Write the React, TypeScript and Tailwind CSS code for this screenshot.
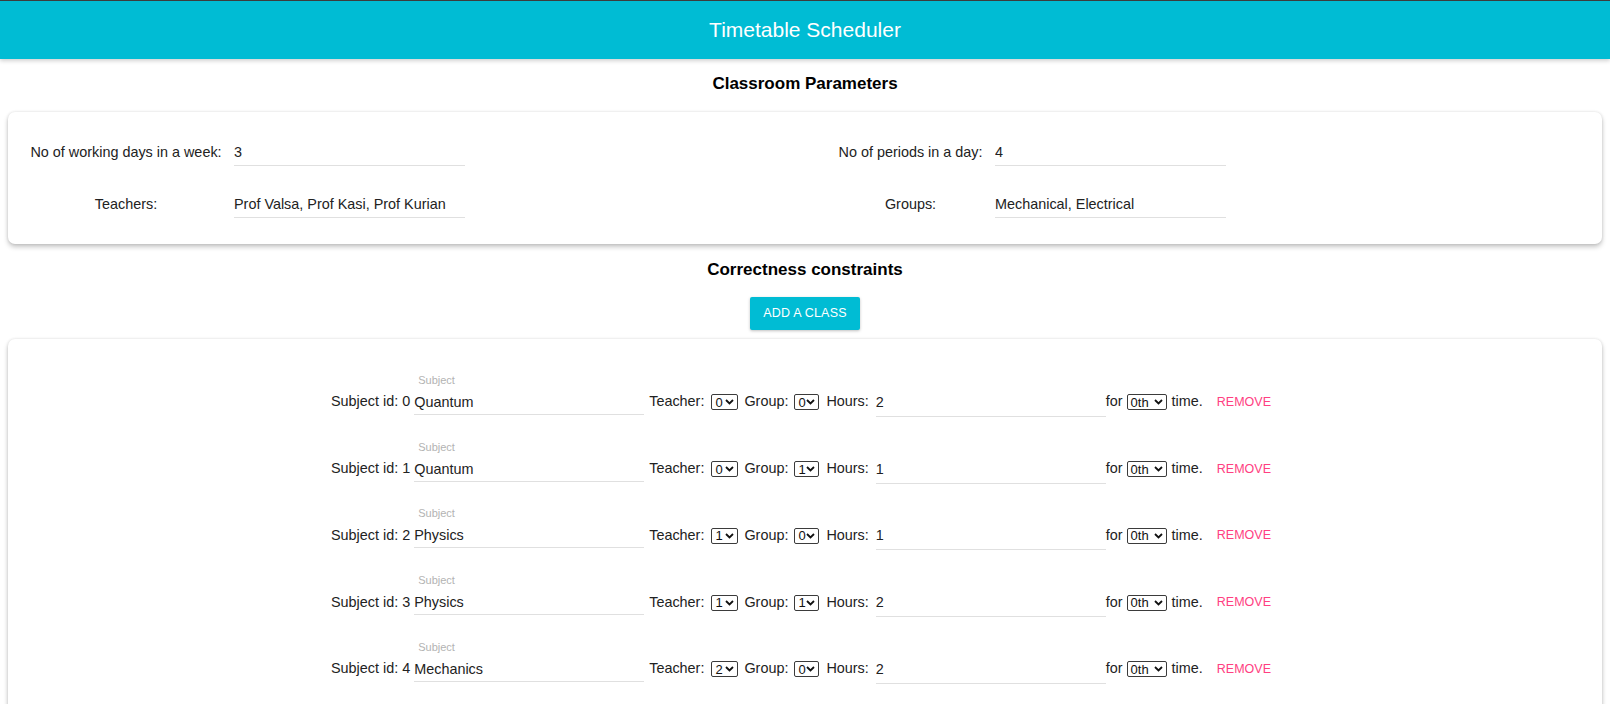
import React from "react";

const rows = [
  { name: "Quantum", teacher: "0", group: "0", hours: "2" },
  { name: "Quantum", teacher: "0", group: "1", hours: "1" },
  { name: "Physics", teacher: "1", group: "0", hours: "1" },
  { name: "Physics", teacher: "1", group: "1", hours: "2" },
  { name: "Mechanics", teacher: "2", group: "0", hours: "2" },
];

function Chevron() {
  return (
    <svg width="9" height="6" viewBox="0 0 9 6" className="shrink-0">
      <path d="M1 1l3.5 3.5L8 1" stroke="#111" strokeWidth="1.8" fill="none" />
    </svg>
  );
}

function Sel({ value, className }: { value: string; className: string }) {
  return (
    <div
      className={
        "flex h-[16px] items-center justify-between rounded-[2px] border border-[#3b3b3b] pl-[3px] pr-[3px] text-[13px] leading-none text-[#111] " +
        className
      }
    >
      <span>{value}</span>
      <Chevron />
    </div>
  );
}

function TopField({ value }: { value: string }) {
  return (
    <input
      readOnly
      value={value}
      className="h-[27px] w-[231px] border-b border-[#e0e0e0] bg-transparent p-0 text-[14.4px] text-[#222] outline-none"
    />
  );
}

export default function App() {
  return (
    <div
      className="min-h-[704px] bg-white text-[#222]"
      style={{ fontFamily: '"Liberation Sans", Arial, sans-serif' }}
    >
      <header className="flex h-[59px] items-center justify-center border-t border-[#3c3c3c] bg-[#00bcd4] shadow-[0_2px_4px_rgba(0,0,0,0.18)]">
        <span className="text-[21px] text-white">Timetable Scheduler</span>
      </header>

      <h2 className="mt-[15px] text-center text-[17px] font-bold leading-[20px] text-black">
        Classroom Parameters
      </h2>

      <div className="mx-[8px] mt-[18px] grid grid-cols-2 rounded-[7px] bg-white pb-[26px] pt-[27px] shadow-[0_3px_5px_rgba(0,0,0,0.22),0_0_3px_rgba(0,0,0,0.12)]">
        <div className="flex flex-col gap-[25px] pl-[22px]">
          <div className="flex items-center">
            <span className="w-[192px] whitespace-nowrap text-center text-[14.4px]">No of working days in a week:</span>
            <div className="ml-[12px]">
              <TopField value="3" />
            </div>
          </div>
          <div className="flex items-center">
            <span className="w-[192px] whitespace-nowrap text-center text-[14.4px]">Teachers:</span>
            <div className="ml-[12px]">
              <TopField value="Prof Valsa, Prof Kasi, Prof Kurian" />
            </div>
          </div>
        </div>
        <div className="flex flex-col gap-[25px] pl-[33px]">
          <div className="flex items-center">
            <span className="w-[145px] whitespace-nowrap text-center text-[14.4px]">No of periods in a day:</span>
            <div className="ml-[12px]">
              <TopField value="4" />
            </div>
          </div>
          <div className="flex items-center">
            <span className="w-[145px] whitespace-nowrap text-center text-[14.4px]">Groups:</span>
            <div className="ml-[12px]">
              <TopField value="Mechanical, Electrical" />
            </div>
          </div>
        </div>
      </div>

      <h2 className="mt-[16px] text-center text-[17px] font-bold leading-[20px] text-black">
        Correctness constraints
      </h2>

      <div className="mt-[17px] flex justify-center">
        <button className="h-[33px] w-[110px] rounded-[2px] bg-[#00bcd4] text-[12.5px] tracking-[0.2px] text-white shadow-[0_1px_3px_rgba(0,0,0,0.25)]">
          ADD A CLASS
        </button>
      </div>

      <div className="mx-[8px] mt-[9px] rounded-[7px] bg-white pb-[40px] pt-[9px] shadow-[0_3px_5px_rgba(0,0,0,0.22),0_0_3px_rgba(0,0,0,0.12)]">
        {rows.map((r, i) => (
          <div key={i} className="flex h-[66.75px] items-end justify-center pr-[8px] text-[14.4px] text-[#222]">
            <div className="flex h-[25px] items-center whitespace-nowrap">Subject id: {i}</div>
            <div className="ml-[4px] flex flex-col">
              <span className="pl-[4px] text-[11px] leading-[14px] text-[#b3b3b3]">Subject</span>
              <input
                readOnly
                value={r.name}
                className="mt-[3px] h-[25px] w-[230px] border-b border-[#e0e0e0] bg-transparent p-0 text-[14.4px] text-[#222] outline-none"
              />
            </div>
            <div className="ml-[5px] flex h-[25px] items-center">Teacher:</div>
            <div className="ml-[7px] flex h-[25px] items-center">
              <Sel value={r.teacher} className="w-[27px]" />
            </div>
            <div className="ml-[6px] flex h-[25px] items-center">Group:</div>
            <div className="ml-[6px] flex h-[25px] items-center">
              <Sel value={r.group} className="w-[25px]" />
            </div>
            <div className="ml-[7px] flex h-[25px] items-center">Hours:</div>
            <div className="mb-[-2px] ml-[7px]">
              <input
                readOnly
                value={r.hours}
                className="h-[27px] w-[230px] border-b border-[#e0e0e0] bg-transparent p-0 pb-[2px] text-[14.4px] text-[#222] outline-none"
              />
            </div>
            <div className="flex h-[25px] items-center">for</div>
            <div className="ml-[4px] flex h-[25px] items-center">
              <Sel value="0th" className="w-[40px]" />
            </div>
            <div className="ml-[5px] flex h-[25px] items-center">time.</div>
            <div className="ml-[14px] flex h-[25px] items-center text-[12.5px] text-[#ff4081]">REMOVE</div>
          </div>
        ))}
      </div>
    </div>
  );
}
